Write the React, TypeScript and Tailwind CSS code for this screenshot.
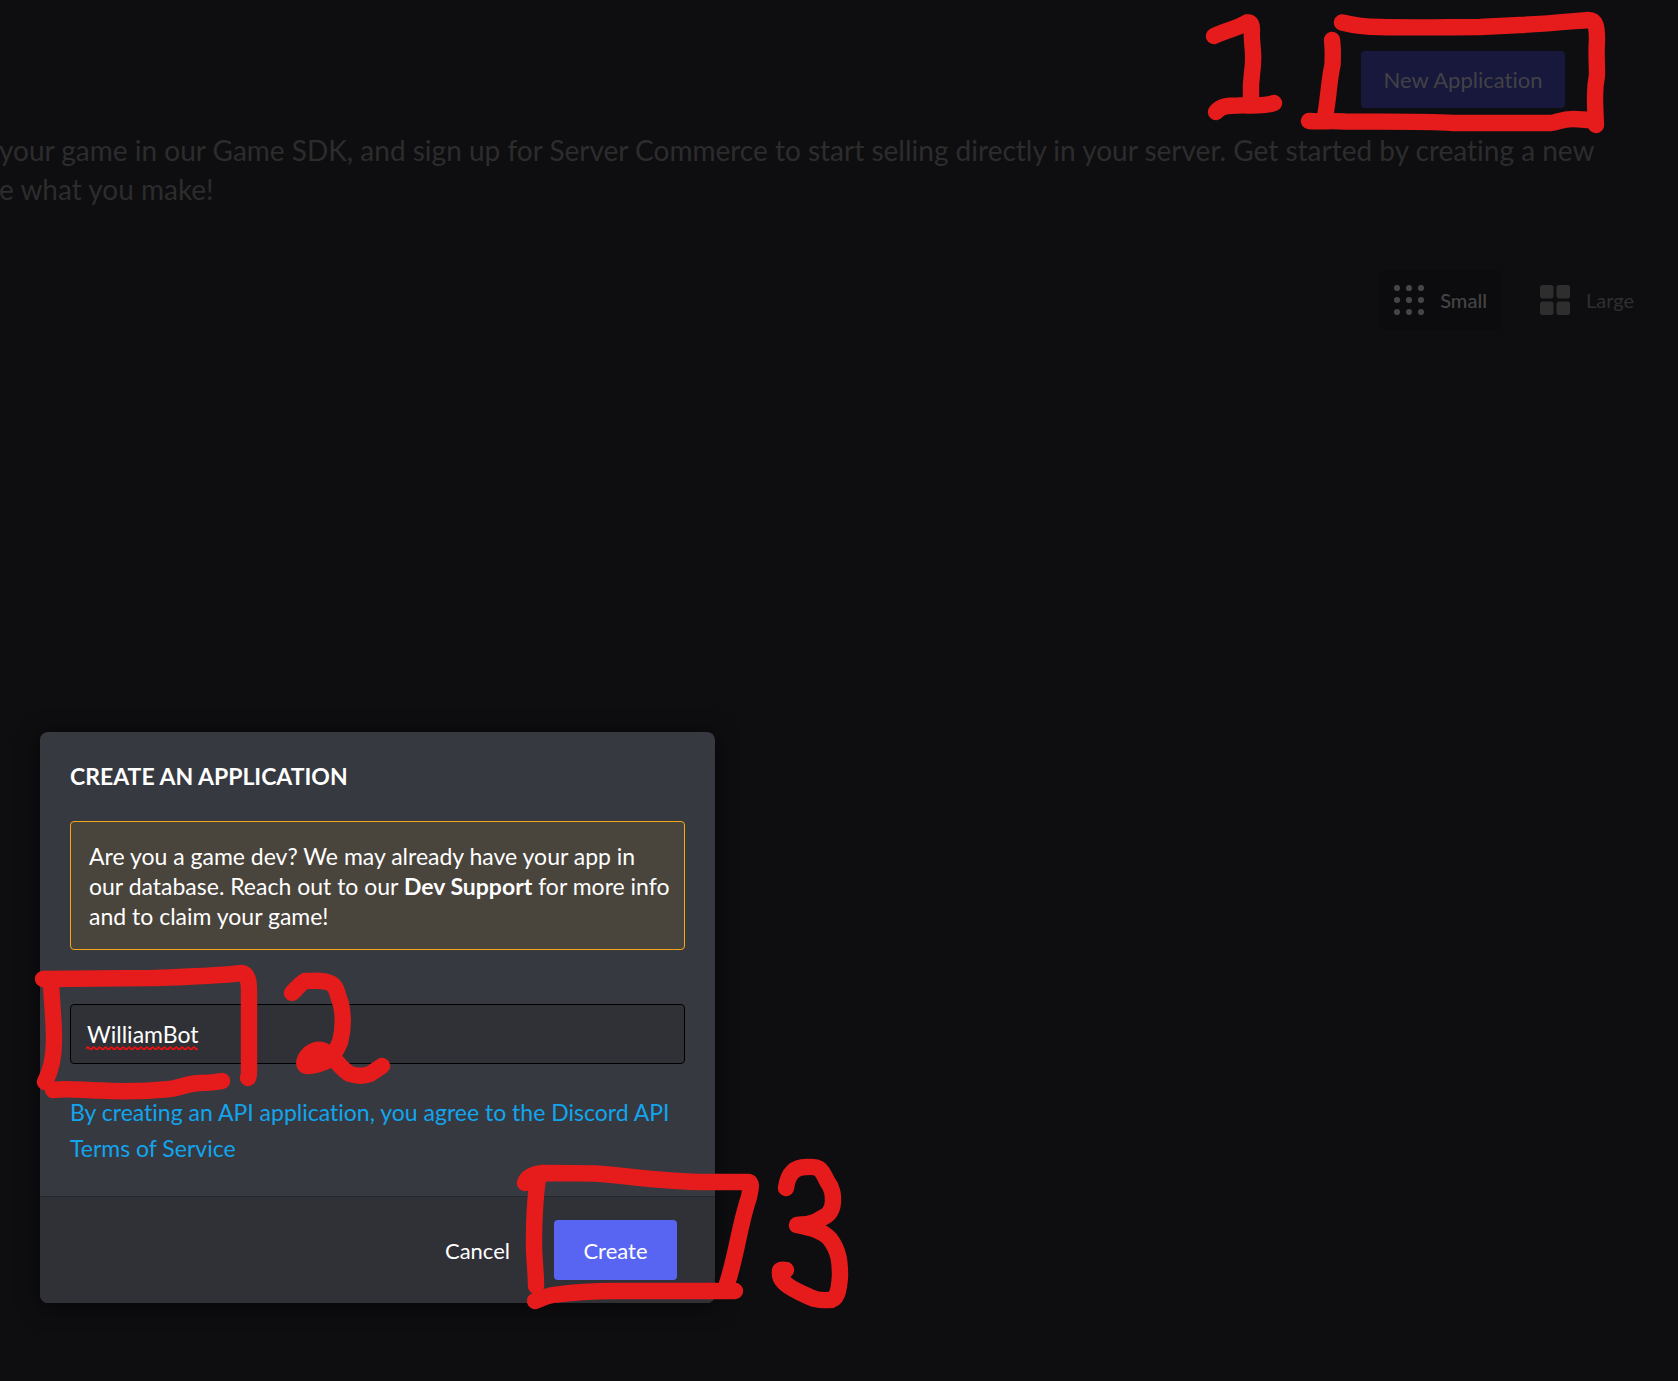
import React from "react";

function Marks({ box, place, paths }: { box: string; place: string; paths: string[] }) {
  return (
    <svg
      aria-hidden="true"
      viewBox={box}
      className={`pointer-events-none absolute max-w-none overflow-visible ${place}`}
      fill="none"
      stroke="#e61c1c"
      strokeWidth="16.4"
      strokeLinecap="round"
      strokeLinejoin="round"
    >
      {paths.map((d) => (
        <path key={d} d={d} />
      ))}
    </svg>
  );
}

const stepOne = [
  "M1214 36C1226 30 1236 29 1247 22.500C1251 22 1252 25 1252 30C1251 42 1254 50 1253 62C1253 72 1250 78 1251 97",
  "M1216 112C1221 106 1227 105.500 1238 105.500C1250 105 1262 107 1274 103",
  "M1332 40C1333 48 1333 55 1332.500 65C1329 80 1329 94 1325.500 114",
  "M1309 121C1320 122 1330 120.500 1345 121.500C1380 122 1420 121 1453 123L1551 123C1558 122 1562 119 1573 119C1580 119 1584 120 1590 120",
  "M1342 22.500C1352 25 1364 27 1380 27C1415 28 1450 27 1480 27L1520 25C1545 24 1565 22 1588 20C1596 20 1597 27 1597 40C1596 52 1597 62 1597 75C1594 90 1595 105 1596 125",
];

const stepTwo = [
  "M43 980L153 979C185 978 218 977 242 974C248 975 249 983 249 993L249 1073C249 1075 249 1077 248 1079",
  "M51 985C52 1005 54 1022 54 1040C54 1058 51 1072 45 1083",
  "M53 1091C65 1089 80 1091 100 1091.500C125 1093 150 1092 170 1090C182 1088 190 1084 200 1084C212 1084 216 1083 222 1082",
  "M292 994C297 989 300 985 305 982C313 982 321 981 327 983C338 985 337 997 341 1005C344 1020 343 1032 340 1043C337 1050 334 1056 329 1061C321 1065 314 1067 308 1067C302 1067 304 1060 309 1055C318 1048 325 1051 331 1057C337 1062 341 1070 350 1075C360 1078 365 1077 370 1075L382 1067",
  "M310 1061L321 1058",
];

const stepThree = [
  "M525 1184C527 1178 534 1175 543 1174C560 1174 577 1174 595 1174.500C630 1177 665 1183 705 1183L748 1183C753 1183 750 1192 749 1198C739 1228 737 1254 727 1285",
  "M538 1180C534 1205 534 1225 534 1245C534 1260 536 1272 536 1287",
  "M535 1302C541 1300 546 1297 553 1296C575 1293 595 1292 615 1292L735 1292",
  "M786 1189C788 1173 796 1168 806 1168C819 1167 821 1169 827 1182C833 1190 833 1196 833 1203C832 1214 827 1217 820 1220C812 1226 805 1225 797 1226C812 1229 823 1232 830 1240C839 1252 840 1263 840 1277C839 1292 837 1301 829 1301C816 1302 812 1299 799 1293C784 1286 779 1280 780 1272C780 1270 784 1271 786 1271",
];

const squiggle = "M0 3" + "q1.500 -3 3 -1t3 1".repeat(19);

export default function App() {
  return (
    <main className="flex min-h-screen flex-col overflow-hidden bg-[#0e0e10] pb-[78px] font-[Lato,sans-serif] [font-variant-ligatures:none]">
      <header className="flex justify-end pt-[51px] pr-[113px]">
        <div className="relative z-10">
          <button type="button" className="h-[57px] w-[204px] rounded bg-[#17183b] text-[22px] leading-7 text-[#424246]">
            New Application
          </button>
          <Marks box="1200 0 410 140" place="-top-[51px] -right-[45px] h-[140px] w-[410px]" paths={stepOne} />
        </div>
      </header>

      <p className="mt-[23px] -ml-px text-[28px] leading-[39px] whitespace-nowrap text-[#2c2c2d]">
        your game in our Game SDK, and sign up for Server Commerce to start selling directly in your server. Get started by creating a new
        <br />
        e what you make!
      </p>

      <div className="mt-[61px] flex justify-end gap-[23px] pr-[29px] text-[20px] leading-7">
        <button type="button" className="flex h-[60px] items-center gap-4 rounded-md bg-[#0c0c0e] px-[15px] font-medium text-[#454545]">
          <svg aria-hidden="true" viewBox="0 0 30 30" className="size-[30px]" fill="currentColor">
            {[3, 15, 27].map((y) => [3, 15, 27].map((x) => <circle key={`${x}-${y}`} cx={x} cy={y} r="3.100" />))}
          </svg>
          Small
        </button>
        <button type="button" className="flex h-[60px] items-center gap-4 rounded-md px-[15px] text-[#2e2e2f]">
          <svg aria-hidden="true" viewBox="0 0 30 30" className="size-[30px]" fill="currentColor">
            <rect width="13.500" height="13.500" rx="2.500" />
            <rect x="16.500" width="13.500" height="13.500" rx="2.500" />
            <rect y="16.500" width="13.500" height="13.500" rx="2.500" />
            <rect x="16.500" y="16.500" width="13.500" height="13.500" rx="2.500" />
          </svg>
          Large
        </button>
      </div>

      <form
        role="dialog"
        aria-labelledby="dialog-title"
        onSubmit={(e) => e.preventDefault()}
        className="relative mt-auto ml-10 w-full max-w-[675px] rounded-lg bg-[#36393f] text-[23px] text-white shadow-[0_3px_22px_rgba(0,0,0,0.6)]"
      >
        <div className="px-[30px] pt-[29px] pb-[30px]">
          <h1 id="dialog-title" className="text-[23px] leading-[30px] font-bold uppercase">
            Create an application
          </h1>
          <p className="mt-[30px] rounded border border-[#faa61a] bg-[#49443c] pt-[19px] pr-3 pb-[18px] pl-[18px] leading-[30px]">
            Are you a game dev? We may already have your app in our database. Reach out to our{" "}
            <a href="#support" className="font-bold">Dev Support</a> for more info and to claim your game!
          </p>
          <div className="relative mt-[54px]">
            <input
              type="text"
              aria-label="Application name"
              defaultValue="WilliamBot"
              spellCheck={false}
              className="block h-[60px] w-full rounded border border-black bg-[#303136] px-4"
            />
            <svg
              aria-hidden="true"
              viewBox="0 0 114 4"
              className="pointer-events-none absolute bottom-[14px] left-4 h-1 w-[112px]"
              fill="none"
              stroke="#f01010"
              strokeWidth="1.800"
            >
              <path d={squiggle} />
            </svg>
          </div>
          <a href="#terms" className="mt-[30px] block leading-9 text-[#12a5ee]">
            By creating an API application, you agree to the Discord API Terms of Service
          </a>
        </div>
        <footer className="flex items-center justify-end gap-4 rounded-b-lg border-t border-[#24272c] bg-[#303136] pt-[23px] pr-[38px] pb-[23px] text-[22px]">
          <button type="button" className="h-[60px] px-7">Cancel</button>
          <button type="submit" className="h-[60px] w-[123px] rounded bg-[#5865f2]">Create</button>
        </footer>
        <Marks box="40 733 840 571" place="top-0 left-0 h-[571px] w-[840px]" paths={[...stepTwo, ...stepThree]} />
      </form>
    </main>
  );
}
